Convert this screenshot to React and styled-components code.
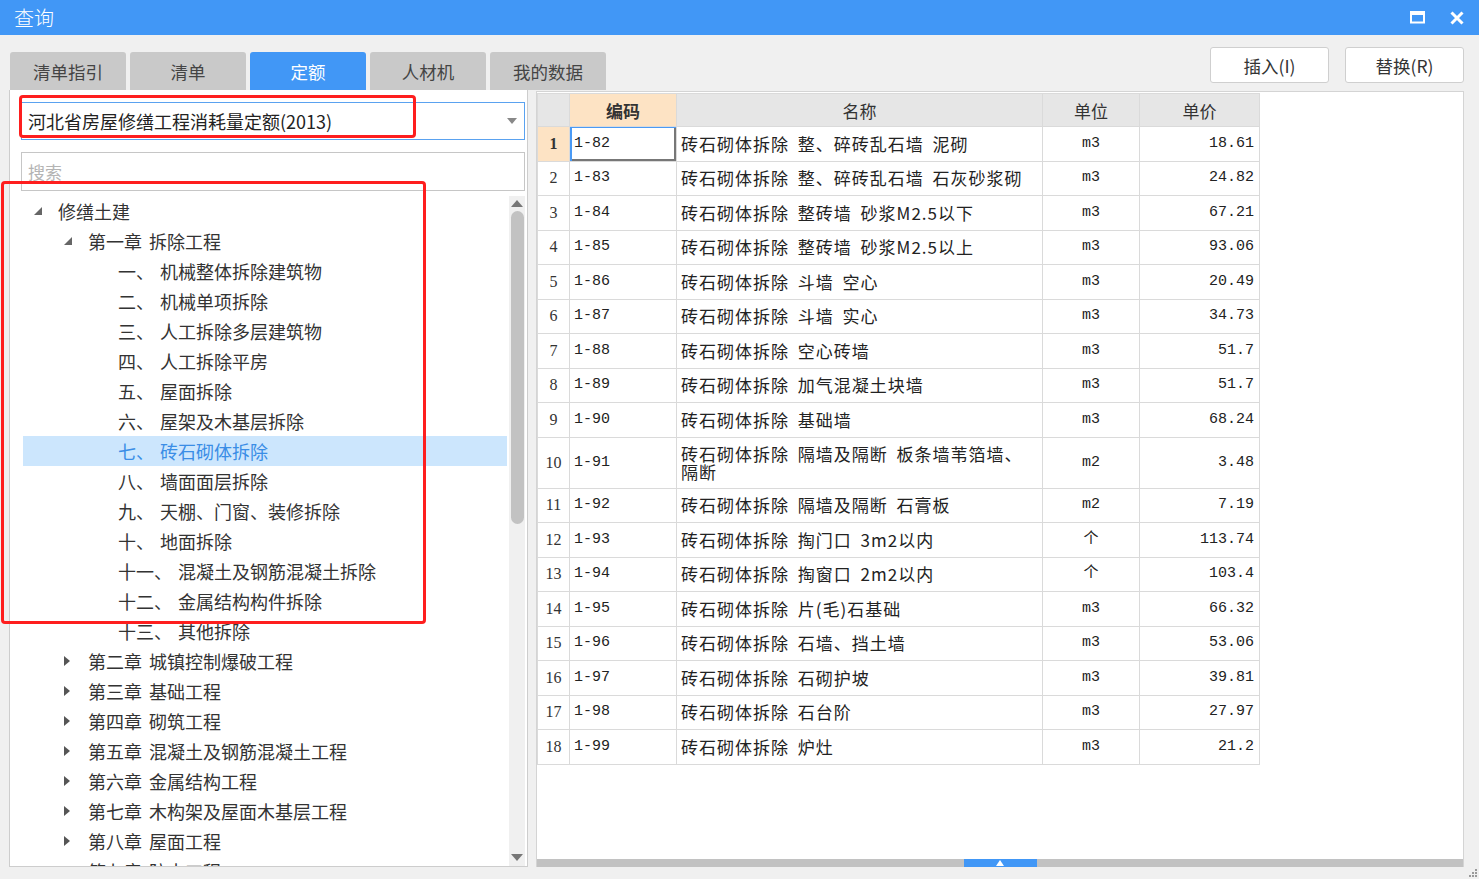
import React from 'react';
import styled, { createGlobalStyle } from 'styled-components';

const GlobalStyle = createGlobalStyle`
  html, body { margin: 0; padding: 0; }
  body {
    background: #f0f0f0;
    font-family: "Noto Sans CJK SC", "Noto Sans", sans-serif;
  }
`;

const tabs = ['清单指引', '清单', '定额', '人材机', '我的数据'];

const tree = [
  { level: 0, label: '修缮土建', open: true },
  { level: 1, label: '第一章 拆除工程', open: true },
  { level: 2, num: '一、', label: '机械整体拆除建筑物' },
  { level: 2, num: '二、', label: '机械单项拆除' },
  { level: 2, num: '三、', label: '人工拆除多层建筑物' },
  { level: 2, num: '四、', label: '人工拆除平房' },
  { level: 2, num: '五、', label: '屋面拆除' },
  { level: 2, num: '六、', label: '屋架及木基层拆除' },
  { level: 2, num: '七、', label: '砖石砌体拆除', selected: true },
  { level: 2, num: '八、', label: '墙面面层拆除' },
  { level: 2, num: '九、', label: '天棚、门窗、装修拆除' },
  { level: 2, num: '十、', label: '地面拆除' },
  { level: 2, num: '十一、', label: '混凝土及钢筋混凝土拆除' },
  { level: 2, num: '十二、', label: '金属结构构件拆除' },
  { level: 2, num: '十三、', label: '其他拆除' },
  { level: 1, label: '第二章 城镇控制爆破工程', open: false },
  { level: 1, label: '第三章 基础工程', open: false },
  { level: 1, label: '第四章 砌筑工程', open: false },
  { level: 1, label: '第五章 混凝土及钢筋混凝土工程', open: false },
  { level: 1, label: '第六章 金属结构工程', open: false },
  { level: 1, label: '第七章 木构架及屋面木基层工程', open: false },
  { level: 1, label: '第八章 屋面工程', open: false },
  { level: 1, label: '第九章 防水工程', open: false },
];

const rows = [
  ['1-82', '砖石砌体拆除 整、碎砖乱石墙 泥砌', 'm3', '18.61'],
  ['1-83', '砖石砌体拆除 整、碎砖乱石墙 石灰砂浆砌', 'm3', '24.82'],
  ['1-84', '砖石砌体拆除 整砖墙 砂浆M2.5以下', 'm3', '67.21'],
  ['1-85', '砖石砌体拆除 整砖墙 砂浆M2.5以上', 'm3', '93.06'],
  ['1-86', '砖石砌体拆除 斗墙 空心', 'm3', '20.49'],
  ['1-87', '砖石砌体拆除 斗墙 实心', 'm3', '34.73'],
  ['1-88', '砖石砌体拆除 空心砖墙', 'm3', '51.7'],
  ['1-89', '砖石砌体拆除 加气混凝土块墙', 'm3', '51.7'],
  ['1-90', '砖石砌体拆除 基础墙', 'm3', '68.24'],
  ['1-91', '砖石砌体拆除 隔墙及隔断 板条墙苇箔墙、\n隔断', 'm2', '3.48'],
  ['1-92', '砖石砌体拆除 隔墙及隔断 石膏板', 'm2', '7.19'],
  ['1-93', '砖石砌体拆除 掏门口 3m2以内', '个', '113.74'],
  ['1-94', '砖石砌体拆除 掏窗口 2m2以内', '个', '103.4'],
  ['1-95', '砖石砌体拆除 片(毛)石基础', 'm3', '66.32'],
  ['1-96', '砖石砌体拆除 石墙、挡土墙', 'm3', '53.06'],
  ['1-97', '砖石砌体拆除 石砌护坡', 'm3', '39.81'],
  ['1-98', '砖石砌体拆除 石台阶', 'm3', '27.97'],
  ['1-99', '砖石砌体拆除 炉灶', 'm3', '21.2'],
];

const App = () => (
  <Window>
    <GlobalStyle />
    <TitleBar>
      <Title>查询</Title>
      <WinButtons>
        <svg width="15" height="13" viewBox="0 0 15 13">
          <rect x="1" y="1.5" width="13" height="10" fill="none" stroke="#fff" strokeWidth="2" />
          <rect x="0" y="0" width="15" height="4" fill="#fff" />
        </svg>
        <svg width="14" height="14" viewBox="0 0 14 14">
          <path d="M1.5 1.5 L12.5 12.5 M12.5 1.5 L1.5 12.5" stroke="#fff" strokeWidth="3" />
        </svg>
      </WinButtons>
    </TitleBar>

    <TopRow>
      <Tabs>
        {tabs.map((t) => (
          <Tab key={t} active={t === '定额'}>{t}</Tab>
        ))}
      </Tabs>
      <Actions>
        <ActionButton>插入(I)</ActionButton>
        <ActionButton>替换(R)</ActionButton>
      </Actions>
    </TopRow>

    <Main>
      <LeftPanel>
        <Select>
          <span>河北省房屋修缮工程消耗量定额(2013)</span>
          <svg width="10" height="6" viewBox="0 0 10 6">
            <path d="M0 0 L10 0 L5 6 Z" fill="#888" />
          </svg>
        </Select>
        <Search>搜索</Search>
        <TreeArea>
          <TreeList>
            {tree.map((n, i) => (
              <TreeRow key={i} level={n.level} selected={n.selected}>
                <Toggle>
                  {n.open === true && (
                    <svg width="8" height="8" viewBox="0 0 8 8">
                      <path d="M8 0 L8 8 L0 8 Z" fill="#666" />
                    </svg>
                  )}
                  {n.open === false && (
                    <svg width="6" height="10" viewBox="0 0 6 10">
                      <path d="M0 0 L6 5 L0 10 Z" fill="#555" />
                    </svg>
                  )}
                </Toggle>
                {n.num && <Num>{n.num}</Num>}
                <span>{n.label}</span>
              </TreeRow>
            ))}
          </TreeList>
          <VScroll>
            <svg width="12" height="7" viewBox="0 0 12 7">
              <path d="M0 7 L6 0 L12 7 Z" fill="#777" />
            </svg>
            <VThumb />
            <VSpace />
            <svg width="12" height="7" viewBox="0 0 12 7">
              <path d="M0 0 L6 7 L12 0 Z" fill="#777" />
            </svg>
          </VScroll>
        </TreeArea>
      </LeftPanel>

      <RightPanel>
        <TableArea>
          <Grid>
            <colgroup>
              <col style={{ width: 32 }} />
              <col style={{ width: 107 }} />
              <col style={{ width: 366 }} />
              <col style={{ width: 97 }} />
              <col style={{ width: 120 }} />
            </colgroup>
            <thead>
              <tr>
                <HeadCell />
                <HeadCell current>编码</HeadCell>
                <HeadCell>名称</HeadCell>
                <HeadCell>单位</HeadCell>
                <HeadCell>单价</HeadCell>
              </tr>
            </thead>
            <tbody>
              {rows.map((r, i) => (
                <tr key={r[0]}>
                  <IndexCell current={i === 0}>{i + 1}</IndexCell>
                  <CodeCell focused={i === 0}>{r[0]}</CodeCell>
                  <NameCell>{r[1]}</NameCell>
                  <UnitCell>{r[2]}</UnitCell>
                  <PriceCell>{r[3]}</PriceCell>
                </tr>
              ))}
            </tbody>
          </Grid>
        </TableArea>
        <HScroll>
          <Splitter>
            <svg width="8" height="6" viewBox="0 0 8 6">
              <path d="M0 6 L4 0 L8 6 Z" fill="#fff" />
            </svg>
          </Splitter>
        </HScroll>
      </RightPanel>
    </Main>

    <Grip>
      <svg width="10" height="10" viewBox="0 0 10 10">
        {[[8, 2], [8, 5], [8, 8], [5, 5], [5, 8], [2, 8]].map(([x, y]) => (
          <rect key={`${x}-${y}`} x={x - 1} y={y - 1} width="2" height="2" fill="#9a9a9a" />
        ))}
      </svg>
    </Grip>

    <Mark style={{ left: 19, top: 95, width: 397, height: 43 }} />
    <Mark style={{ left: 1, top: 181, width: 425, height: 443 }} />
  </Window>
);

export default App;

const Window = styled.div`
  position: relative;
  width: 1479px;
  height: 879px;
  display: flex;
  flex-direction: column;
  background: #f0f0f0;
  overflow: hidden;
`;

const TitleBar = styled.div`
  height: 35px;
  flex: none;
  display: flex;
  align-items: center;
  justify-content: space-between;
  padding: 0 15px 0 14px;
  background: #4197f6;
`;

const Title = styled.div`
  color: #fff;
  font-size: 20px;
  line-height: 20px;
  font-weight: 300;
`;

const WinButtons = styled.div`
  display: flex;
  align-items: center;
  gap: 25px;
`;

const TopRow = styled.div`
  height: 55px;
  flex: none;
  display: flex;
  justify-content: space-between;
  padding: 0 15px 0 10px;
`;

const Tabs = styled.div`
  align-self: flex-end;
  display: flex;
  gap: 4px;
`;

const Tab = styled.div`
  width: 116px;
  height: 38px;
  display: flex;
  align-items: center;
  justify-content: center;
  border-radius: 3px 3px 0 0;
  font-size: 17.5px;
  color: ${(p) => (p.active ? '#fff' : '#444')};
  background: ${(p) => (p.active ? '#4197f6' : '#c9c9c9')};
`;

const Actions = styled.div`
  display: flex;
  gap: 16px;
  margin-top: 12px;
`;

const ActionButton = styled.div`
  width: 117px;
  height: 34px;
  display: flex;
  align-items: center;
  justify-content: center;
  background: #fff;
  border: 1px solid #cfcfcf;
  border-radius: 3px;
  font-size: 17.5px;
  color: #333;
`;

const Main = styled.div`
  height: 777px;
  flex: none;
  display: flex;
  gap: 8px;
  padding-left: 9px;
`;

const LeftPanel = styled.div`
  width: 519px;
  box-sizing: border-box;
  display: flex;
  flex-direction: column;
  padding: 12px 2px 0 11px;
  background: #fff;
  border: 1px solid #cdcdcd;
  border-top: none;
`;

const Select = styled.div`
  height: 38px;
  box-sizing: border-box;
  display: flex;
  align-items: center;
  justify-content: space-between;
  padding: 0 7px 0 6px;
  border: 1px solid #5aa2f0;
  font-size: 18px;
  color: #222;
`;

const Search = styled.div`
  height: 39px;
  box-sizing: border-box;
  margin-top: 12px;
  display: flex;
  align-items: center;
  padding-left: 6px;
  border: 1px solid #c6c6c6;
  font-size: 17px;
  color: #b4b4b4;
`;

const TreeArea = styled.div`
  flex: 1;
  min-height: 0;
  display: flex;
  margin-top: 5px;
  overflow: hidden;
`;

const TreeList = styled.div`
  flex: 1;
  padding-left: 2px;
  overflow: hidden;
`;

const TreeRow = styled.div`
  height: 30px;
  display: flex;
  align-items: center;
  margin-right: 2px;
  padding-left: ${(p) => 11 + p.level * 30}px;
  font-size: 18px;
  word-spacing: 3px;
  white-space: nowrap;
  color: ${(p) => (p.selected ? '#3a8de6' : '#333')};
  background: ${(p) => (p.selected ? '#cce6fd' : 'transparent')};
`;

const Toggle = styled.span`
  width: 24px;
  flex: none;
  display: flex;
  align-items: center;
`;

const Num = styled.span`
  margin-right: 6px;
`;

const VScroll = styled.div`
  width: 16px;
  flex: none;
  display: flex;
  flex-direction: column;
  align-items: center;
  padding: 4px 0 5px;
  box-sizing: border-box;
  background: #f0f0f0;
`;

const VThumb = styled.div`
  width: 13px;
  height: 313px;
  margin-top: 4px;
  border-radius: 7px;
  background: #c2c2c2;
`;

const VSpace = styled.div`
  flex: 1;
`;

const RightPanel = styled.div`
  width: 928px;
  box-sizing: border-box;
  display: flex;
  flex-direction: column;
  margin-top: 1px;
  background: #fff;
  border: 1px solid #d4d4d4;
  border-bottom: none;
`;

const TableArea = styled.div`
  flex: 1;
  min-height: 0;
  overflow: hidden;
`;

const Grid = styled.table`
  width: 722px;
  table-layout: fixed;
  border-collapse: collapse;
  margin-top: 1px;

  td, th {
    border: 1px solid #dadada;
  }

  tbody tr {
    height: 34.5px;
  }
`;

const HeadCell = styled.th`
  height: 32px;
  padding: 0;
  font-size: 17px;
  font-weight: ${(p) => (p.current ? 700 : 400)};
  color: #333;
  background: ${(p) => (p.current ? '#fde3c4' : '#e6e6e6')};
`;

const IndexCell = styled.td`
  padding: 0;
  text-align: center;
  font-family: "Liberation Serif", serif;
  font-size: 16px;
  font-weight: ${(p) => (p.current ? 700 : 400)};
  color: #333;
  background: ${(p) => (p.current ? '#fde3c4' : '#fff')};
`;

const BodyCell = styled.td`
  padding: 7px 4px;
  line-height: 18px;
  color: #222;
  vertical-align: middle;
`;

const CodeCell = styled(BodyCell)`
  font-family: "Liberation Mono", monospace;
  font-size: 15px;
  box-shadow: ${(p) =>
    p.focused
      ? 'inset 2px 0 #4a9af5, inset 0 1px #4a9af5, inset -2px 0 #777, inset 0 -2px #777'
      : 'none'};
`;

const NameCell = styled(BodyCell)`
  font-size: 17px;
  letter-spacing: 1px;
  word-spacing: 4px;
  white-space: pre-line;
`;

const UnitCell = styled(BodyCell)`
  text-align: center;
  font-family: "Liberation Mono", "Noto Sans CJK SC", monospace;
  font-size: 15px;
`;

const PriceCell = styled(BodyCell)`
  text-align: right;
  padding-right: 5px;
  font-family: "Liberation Mono", monospace;
  font-size: 15px;
`;

const HScroll = styled.div`
  height: 8px;
  flex: none;
  display: flex;
  justify-content: center;
  background: #c2c2c2;
`;

const Splitter = styled.div`
  width: 73px;
  display: flex;
  align-items: center;
  justify-content: center;
  background: #4197f6;
`;

const Grip = styled.div`
  position: absolute;
  right: 1px;
  bottom: 1px;
  display: flex;
`;

const Mark = styled.div`
  position: absolute;
  box-sizing: border-box;
  border: 3px solid #fe1e1e;
  border-radius: 4px;
  pointer-events: none;
`;
